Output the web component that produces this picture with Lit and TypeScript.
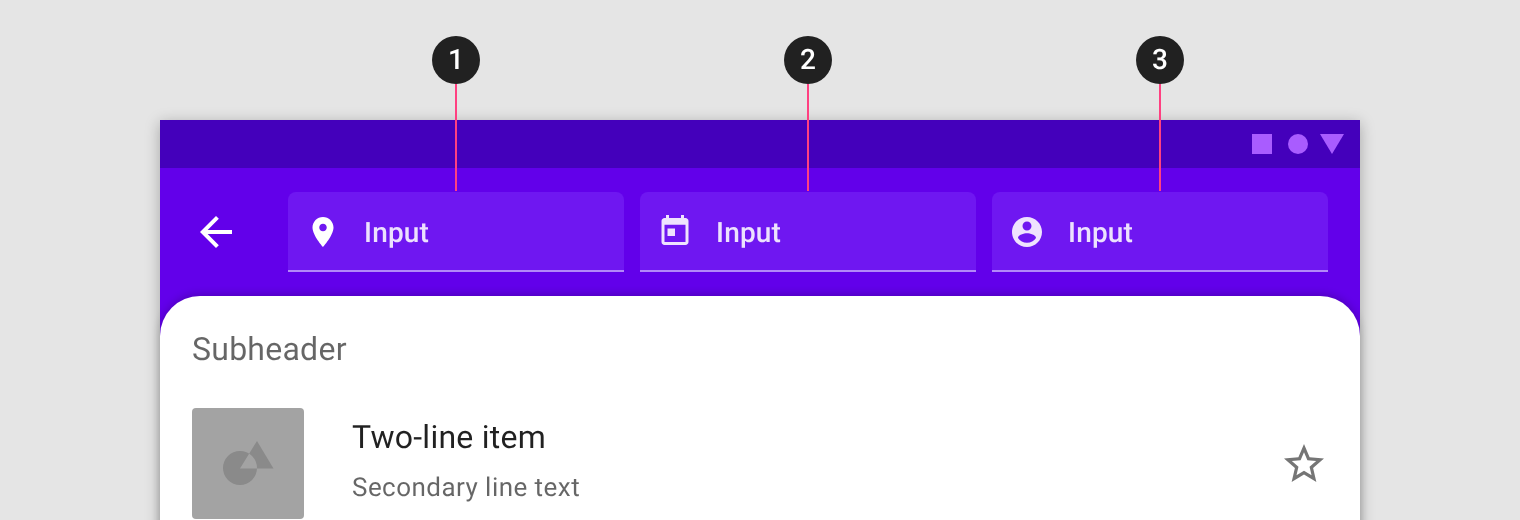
import { LitElement, html, css } from "lit";
import { customElement } from "lit/decorators.js";

const icons = {
  pin: "M12 2C8.13 2 5 5.13 5 9c0 5.25 7 13 7 13s7-7.75 7-13c0-3.87-3.13-7-7-7zm0 9.5c-1.38 0-2.5-1.12-2.5-2.5s1.12-2.5 2.5-2.5 2.5 1.12 2.5 2.5-1.12 2.5-2.5 2.5z",
  cal: "M19 4h-1V2h-2v2H8V2H6v2H5c-1.11 0-1.99.9-1.99 2L3 20c0 1.1.89 2 2 2h14c1.1 0 2-.9 2-2V6c0-1.1-.9-2-2-2zm0 16H5V8.5h14V20zM7 11h5v5H7z",
  person: "M12 2C6.48 2 2 6.48 2 12s4.48 10 10 10 10-4.48 10-10S17.52 2 12 2zm0 3c1.66 0 3 1.34 3 3s-1.34 3-3 3-3-1.34-3-3 1.34-3 3-3zm0 14.2c-2.5 0-4.71-1.28-6-3.22.03-1.99 4-3.08 6-3.08 1.99 0 5.97 1.09 6 3.08-1.29 1.94-3.5 3.22-6 3.22z",
};

@customElement("app-root")
export class AppRoot extends LitElement {
  static styles = css`
    :host {
      display: block;
      height: 520px;
      overflow: hidden;
      background: #e5e5e5;
      font-family: Roboto, sans-serif;
      text-rendering: geometricPrecision;
      padding: 120px 160px 0;
      box-sizing: border-box;
    }
    .device {
      height: 520px;
      background: #6200ea;
      box-shadow: 0 3px 14px rgba(0, 0, 0, 0.28);
    }
    .status {
      height: 48px;
      background: #4400bb;
      display: flex;
      align-items: center;
      justify-content: flex-end;
      gap: 16px;
      padding-right: 16px;
    }
    .status .sq { width: 20px; height: 20px; background: #a95cff; }
    .status .ci { width: 20px; height: 20px; background: #a95cff; border-radius: 50%; margin-right: -4px; }
    .status svg { width: 24px; height: 20px; display: block; }
    .bar {
      display: flex;
      padding: 24px 32px 24px 32px;
      height: 128px;
      box-sizing: border-box;
    }
    .back {
      width: 96px;
      flex: none;
      display: flex;
      align-items: center;
    }
    .back svg { width: 48px; height: 48px; fill: #fff; display: block; }
    .fields { flex: 1; display: flex; gap: 16px; }
    .field {
      flex: 1;
      height: 80px;
      box-sizing: border-box;
      position: relative;
      display: flex;
      align-items: center;
      gap: 23px;
      padding-left: 17px;
      background: #6f17f1;
      border-bottom: 2px solid #b388f8;
      border-radius: 8px 8px 0 0;
      color: rgba(255, 255, 255, 0.87);
      font-size: 28px;
      font-weight: 500;
      letter-spacing: 0.2px;
    }
    .field > span { padding-top: 2px; will-change: transform; }
    .field svg { width: 36px; height: 36px; display: block; flex: none; fill: #efe3fe; }
    .field svg.pin { fill: #fff; margin-top: 2px; }
    .field svg.person { margin-top: 2px; }
    .field svg.cal { margin-bottom: 2px; }
    .marker {
      position: absolute;
      left: 50%;
      bottom: calc(100% + 1px);
      transform: translateX(-50%);
      display: flex;
      flex-direction: column;
      align-items: center;
    }
    .num {
      width: 48px;
      height: 48px;
      border-radius: 50%;
      background: #212121;
      color: #fff;
      font-size: 28px;
      font-weight: 500;
      letter-spacing: 0;
      display: flex;
      align-items: center;
      justify-content: center;
      box-sizing: border-box;
      padding-bottom: 1px;
    }
    .num span { will-change: transform; }
    .line { width: 2px; height: 107px; background: #ff4081; }
    .sheet {
      height: 400px;
      background: #fff;
      border-radius: 40px 40px 0 0;
      box-shadow: 0 -2px 8px rgba(0, 0, 0, 0.2);
      padding: 0 32px;
      box-sizing: border-box;
    }
    .sub {
      height: 112px;
      padding-bottom: 6px;
      box-sizing: border-box;
      display: flex;
      align-items: center;
      font-size: 32px;
      color: rgba(0, 0, 0, 0.6);
      letter-spacing: 0.25px;
    }
    .sub span { will-change: transform; }
    .item { display: flex; align-items: flex-start; }
    .thumb {
      width: 112px;
      height: 111px;
      flex: none;
      border-radius: 4px;
      background: #a3a3a3;
      display: flex;
      align-items: flex-start;
      justify-content: center;
    }
    .thumb svg { width: 112px; height: 112px; display: block; fill: #8a8a8a; fill-rule: evenodd; }
    .text { flex: 1; padding-left: 48px; will-change: transform; }
    .t1 { font-size: 32px; line-height: 40px; margin-top: 9px; color: rgba(0, 0, 0, 0.87); letter-spacing: 0.25px; }
    .t2 { font-size: 26px; line-height: 36px; margin-top: 13px; color: rgba(0, 0, 0, 0.6); letter-spacing: 0.45px; }
    .star { width: 48px; height: 48px; margin-top: 32px; fill: #757575; flex: none; display: block; }
  `;

  private field(n: number, key: keyof typeof icons) {
    return html`<div class="field">
      <div class="marker"><div class="num"><span>${n}</span></div><div class="line"></div></div>
      <svg class=${key} viewBox="0 0 24 24"><path d=${icons[key]}></path></svg>
      <span>Input</span>
    </div>`;
  }

  render() {
    return html`<div class="device">
      <div class="status">
        <div class="sq"></div>
        <div class="ci"></div>
        <svg viewBox="0 0 24 20"><path d="M0 0h24L12 20z" fill="#a95cff"></path></svg>
      </div>
      <div class="bar">
        <div class="back">
          <svg viewBox="0 0 24 24"><path d="M20 11H7.83l5.59-5.59L12 4l-8 8 8 8 1.41-1.41L7.83 13H20v-2z"></path></svg>
        </div>
        <div class="fields">
          ${this.field(1, "pin")}${this.field(2, "cal")}${this.field(3, "person")}
        </div>
      </div>
      <div class="sheet">
        <div class="sub"><span>Subheader</span></div>
        <div class="item">
          <div class="thumb">
            <svg viewBox="0 0 112 112">
              <path d="M48 43a17 17 0 1 0 17 17 17 17 0 0 0-17-17zM65 33L48 60.500H81.500z"></path>
            </svg>
          </div>
          <div class="text">
            <div class="t1">Two-line item</div>
            <div class="t2">Secondary line text</div>
          </div>
          <svg class="star" viewBox="0 0 24 24"><path d="M22 9.24l-7.19-.62L12 2 9.19 8.63 2 9.24l5.46 4.73L5.82 21 12 17.27 18.18 21l-1.63-7.03L22 9.24zM12 15.4l-3.76 2.27 1-4.28-3.32-2.88 4.38-.38L12 6.1l1.71 4.04 4.38.38-3.32 2.88 1 4.28L12 15.4z"></path></svg>
        </div>
      </div>
    </div>`;
  }
}
